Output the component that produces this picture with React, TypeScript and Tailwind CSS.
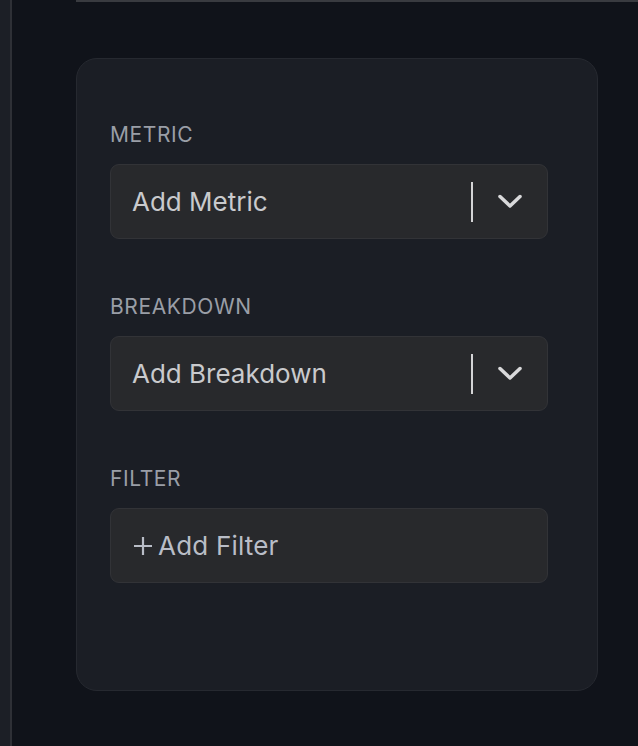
import React from 'react'

function ChevronDown() {
  return (
    <svg width="26" height="18" viewBox="0 0 26 18" fill="none">
      <polyline
        points="3,3.5 13,13 23,3.5"
        stroke="#d9d9db"
        strokeWidth="3.5"
        strokeLinecap="round"
        strokeLinejoin="round"
      />
    </svg>
  )
}

function PlusIcon() {
  return (
    <svg width="20" height="20" viewBox="0 0 20 20" fill="none">
      <path d="M10 1v18M1 10h18" stroke="#b9bdc7" strokeWidth="2.2" />
    </svg>
  )
}

function SelectBox({ placeholder }: { placeholder: string }) {
  return (
    <div className="flex h-[75px] items-center rounded-[9px] border border-[#323337] bg-[#28292c] pl-[21px] pr-[24px]">
      <span className="flex-1 text-[26px] text-[#c9cacd]">{placeholder}</span>
      <div className="h-[40px] w-[2px] bg-[#d4d4d6]" />
      <div className="ml-[24px] flex items-center">
        <ChevronDown />
      </div>
    </div>
  )
}

function Label({ children }: { children: React.ReactNode }) {
  return (
    <div className="mb-[15px] text-[21px] leading-[28px] tracking-[0.6px] text-[#9a9ea7]">
      {children}
    </div>
  )
}

export default function App() {
  return (
    <div
      className="flex h-[746px] w-full overflow-hidden bg-[#10131a]"
      style={{ fontFamily: 'Inter, "Noto Sans", sans-serif' }}
    >
      {/* left rail */}
      <div className="w-[12px] shrink-0 border-r-2 border-[#2e3036] bg-[#1c1f26]" />

      <div className="flex-1 pl-[64px]">
        <div className="h-[2px] bg-[#393b40]" />

        <div className="mt-[56px] w-[522px] rounded-[21px] border border-[#262930] bg-[#1b1e25] pb-[107px] pl-[33px] pr-[49px] pt-[62px]">
          <Label>METRIC</Label>
          <SelectBox placeholder="Add Metric" />

          <div className="mt-[54px]">
            <Label>BREAKDOWN</Label>
            <SelectBox placeholder="Add Breakdown" />
          </div>

          <div className="mt-[54px]">
            <Label>FILTER</Label>
            <div className="flex h-[75px] items-center gap-[5px] rounded-[9px] border border-[#323337] bg-[#28292c] pl-[22px]">
              <PlusIcon />
              <span className="text-[26px] tracking-[0.2px] text-[#b9bdc7]">Add Filter</span>
            </div>
          </div>
        </div>
      </div>
    </div>
  )
}
